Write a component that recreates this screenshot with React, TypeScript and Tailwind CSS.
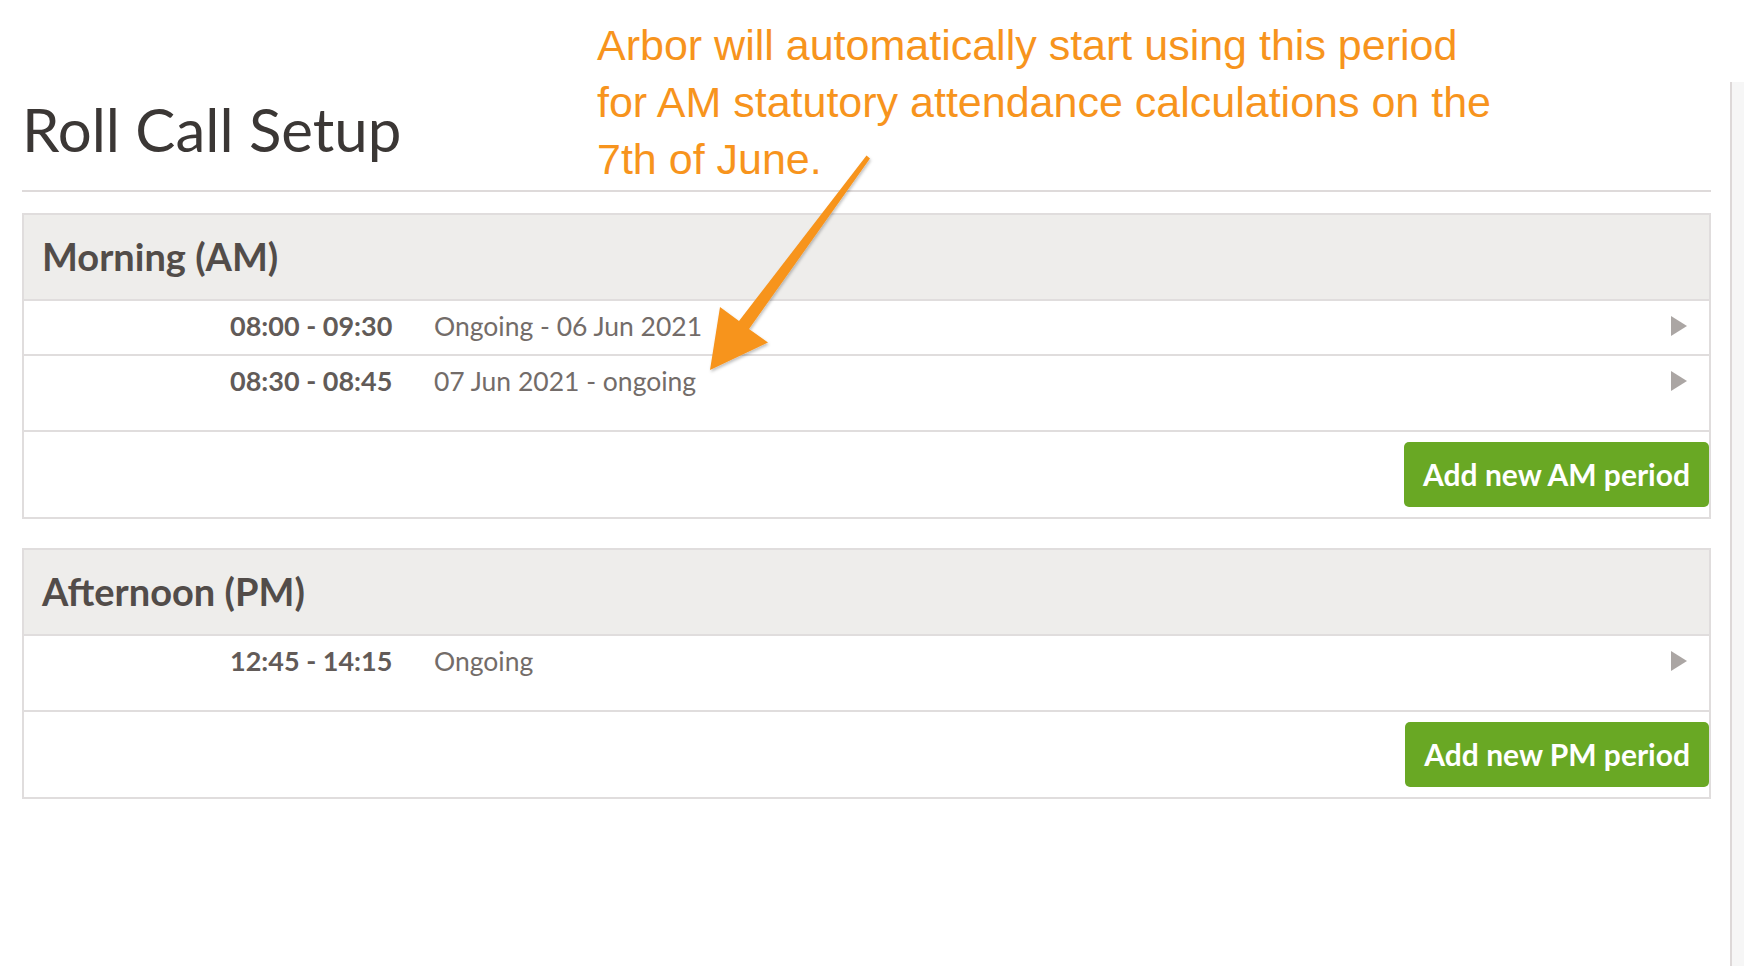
import type { ReactNode } from "react";

type Period = {
  time: string;
  label: string;
};

const SECTIONS: { title: string; button: string; periods: Period[] }[] = [
  {
    title: "Morning (AM)",
    button: "Add new AM period",
    periods: [
      { time: "08:00 - 09:30", label: "Ongoing - 06 Jun 2021" },
      { time: "08:30 - 08:45", label: "07 Jun 2021 - ongoing" },
    ],
  },
  {
    title: "Afternoon (PM)",
    button: "Add new PM period",
    periods: [{ time: "12:45 - 14:15", label: "Ongoing" }],
  },
];

function PlayArrow() {
  return (
    <svg width="16" height="20" viewBox="0 0 16 20" className="shrink-0">
      <polygon points="0,0 16,10 0,20" fill="#aba6a4" />
    </svg>
  );
}

function PeriodRow({ period, last }: { period: Period; last: boolean }) {
  return (
    <div
      className={
        last
          ? "flex h-[53px] items-center pb-[3px] pl-[206px] pr-[22px]"
          : "flex h-[55px] items-center border-b-2 border-[#e0dddd] pb-[3px] pl-[206px] pr-[22px]"
      }
    >
      <span className="w-[204px] shrink-0 text-[27px] font-bold text-[#625b58]">{period.time}</span>
      <span className="flex-1 text-[26.5px] text-[#736c69]">{period.label}</span>
      <PlayArrow />
    </div>
  );
}

function Section({ title, button, children }: { title: string; button: string; children: ReactNode }) {
  return (
    <section className="border-2 border-[#e0dddd]">
      <div className="flex h-[86px] items-center border-b-2 border-[#e0dddd] bg-[#eeedeb] pl-[18px]">
        <h2 className="text-[38px] leading-[1.2] font-bold text-[#524c49]">{title}</h2>
      </div>
      <div className="pb-[21px] leading-[32px]">{children}</div>
      <div className="flex h-[87px] justify-end border-t-2 border-[#e0dddd] pt-[10px]">
        <button className="h-[65px] rounded-[5px] bg-[#69a824] px-[19px] text-[30px] font-bold text-white">
          {button}
        </button>
      </div>
    </section>
  );
}

function Annotation() {
  return (
    <>
      <p
        className="absolute left-[597px] top-[17px] text-[43px] leading-[57px] text-[#f7941d]"
        style={{ fontFamily: '"Liberation Sans", Arial, sans-serif' }}
      >
        Arbor will automatically start using this period
        <br />
        for AM statutory attendance calculations on the
        <br />
        7th of June.
      </p>
      <svg
        className="pointer-events-none absolute left-0 top-0"
        width="1744"
        height="966"
        viewBox="0 0 1744 966"
      >
        <defs>
          <filter id="arrowShadow" x="-20%" y="-20%" width="140%" height="140%">
            <feDropShadow dx="1" dy="2" stdDeviation="1.5" floodColor="#000" floodOpacity="0.25" />
          </filter>
        </defs>
        <polygon
          points="866.5,155.5 870,158.5 749,329 768,342.5 710,370 720,307 739,321"
          fill="#f7941d"
          strokeLinejoin="round"
          filter="url(#arrowShadow)"
        />
      </svg>
    </>
  );
}

export default function App() {
  return (
    <div
      className="relative flex h-[966px] w-full overflow-hidden bg-white"
      style={{ fontFamily: 'Lato, "Open Sans", sans-serif' }}
    >
      <main className="flex-1 pl-[22px] pr-[19px] pt-[93px]">
        <h1 className="mb-[25px] text-[60px] leading-[72px] font-normal text-[#3b3735]">
          Roll Call Setup
        </h1>
        <div className="h-[2px] bg-[#dedada]" />
        <div className="mt-[21px] flex flex-col gap-[29px]">
          {SECTIONS.map((s) => (
            <Section key={s.title} title={s.title} button={s.button}>
              {s.periods.map((p, i) => (
                <PeriodRow key={p.time} period={p} last={i === s.periods.length - 1} />
              ))}
            </Section>
          ))}
        </div>
      </main>
      <aside className="mt-[82px] w-[14px] shrink-0 border-l-2 border-[#ddd8d8] bg-[#f6f6f6]" />
      <Annotation />
    </div>
  );
}
